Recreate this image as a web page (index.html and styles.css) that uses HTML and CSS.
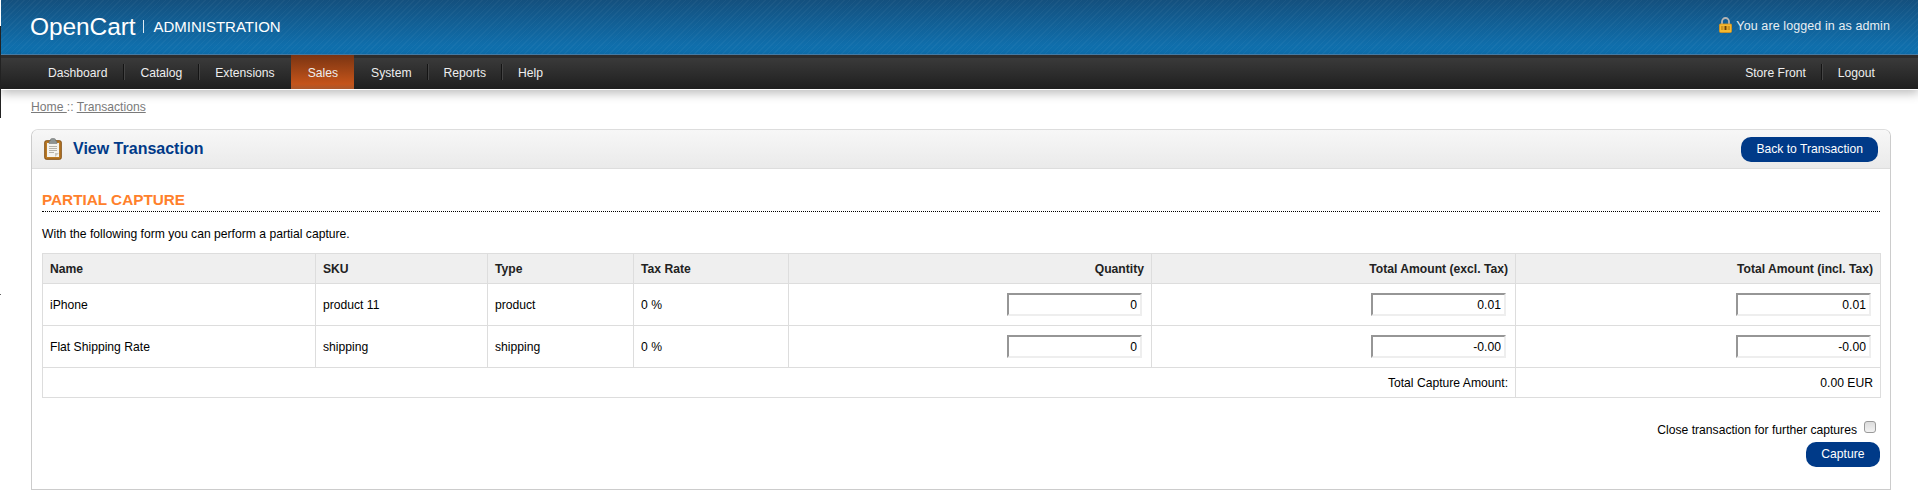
FILE: index.html
```html
<!DOCTYPE html>
<html lang="en">
<head>
<meta charset="utf-8">
<title>View Transaction</title>
<link rel="stylesheet" href="styles.css">
</head>
<body>
<div class="scan-edge"></div>
<header class="header">
  <div class="brand">
    <span class="logo">OpenCart</span>
    <span class="admin">ADMINISTRATION</span>
  </div>
  <div class="logged">
    <svg class="lock" width="13" height="16" viewBox="0 0 13 16">
      <path d="M3 8V4.500a3.500 3.500 0 0 1 7 0V8" fill="none" stroke="#b4b4b4" stroke-width="1.800"/>
      <rect x=".5" y="7" width="12" height="8.500" rx="1" fill="#f6b92f" stroke="#d9931a" stroke-width=".8"/>
      <rect x="5.500" y="9" width="2" height="4" fill="#6d4206"/>
      <path d="M2 10h2.500M2 12h2.500M8.500 10H11M8.500 12H11" stroke="#a86f10"/>
    </svg>
    <span>You are logged in as admin</span>
  </div>
</header>
<nav class="menu">
  <ul class="menu-left">
    <li><a>Dashboard</a></li>
    <li><a>Catalog</a></li>
    <li><a>Extensions</a></li>
    <li class="selected"><a>Sales</a></li>
    <li class="tight"><a>System</a></li>
    <li class="tight"><a>Reports</a></li>
    <li class="last"><a>Help</a></li>
  </ul>
  <ul class="menu-right">
    <li class="tight"><a>Store Front</a></li>
    <li class="last"><a>Logout</a></li>
  </ul>
</nav>
<main class="content">
  <div class="breadcrumb"><a>Home </a> :: <a>Transactions</a></div>
  <section class="box">
    <div class="heading">
      <h1>
        <svg class="clip" width="18" height="22" viewBox="0 0 18 22">
          <rect x=".75" y="2.750" width="16.500" height="18.500" rx="1.500" fill="#bb7a25" stroke="#7d4a0e" stroke-width="1"/>
          <path d="M3 5h12v14H3z" fill="#f4f3ef"/>
          <path d="M11 19l4-4h-4z" fill="#c9c6bd"/>
          <path d="M5 8.500h8M5 10.500h8M5 12.500h8M5 14.500h5" stroke="#b5b2aa" stroke-width="1"/>
          <path d="M5 3.500L6.500 2.500V1.500C6.500 .8 7.500 .5 9 .5s2.500 .3 2.500 1V2.500L13 3.500V5.500H5z" fill="#8e9493" stroke="#666b6a" stroke-width=".5"/>
        </svg>
        View Transaction
      </h1>
      <a class="button">Back to Transaction</a>
    </div>
    <div class="box-body">
      <h2>PARTIAL CAPTURE</h2>
      <p class="intro">With the following form you can perform a partial capture.</p>
      <table class="list">
        <colgroup>
          <col class="c-name"><col class="c-sku"><col class="c-type"><col class="c-tax"><col class="c-qty"><col class="c-ex"><col class="c-inc">
        </colgroup>
        <thead>
          <tr>
            <th>Name</th><th>SKU</th><th>Type</th><th>Tax Rate</th>
            <th class="right">Quantity</th><th class="right">Total Amount (excl. Tax)</th><th class="right">Total Amount (incl. Tax)</th>
          </tr>
        </thead>
        <tbody>
          <tr class="item">
            <td>iPhone</td><td>product 11</td><td>product</td><td>0 %</td>
            <td class="right"><input type="text" value="0"></td>
            <td class="right"><input type="text" value="0.01"></td>
            <td class="right"><input type="text" value="0.01"></td>
          </tr>
          <tr class="item">
            <td>Flat Shipping Rate</td><td>shipping</td><td>shipping</td><td>0 %</td>
            <td class="right"><input type="text" value="0"></td>
            <td class="right"><input type="text" value="-0.00"></td>
            <td class="right"><input type="text" value="-0.00"></td>
          </tr>
          <tr class="total">
            <td class="right" colspan="6">Total Capture Amount:</td>
            <td class="right">0.00 EUR</td>
          </tr>
        </tbody>
      </table>
      <div class="close-row">
        <label for="close">Close transaction for further captures</label>
        <input id="close" class="check" type="checkbox">
      </div>
      <div class="submit-row"><a class="button">Capture</a></div>
    </div>
  </section>
</main>
</body>
</html>
```
FILE: styles.css
```css
* { box-sizing: border-box; }
html, body { margin: 0; padding: 0; background: #fff; }
body { font-family: "Liberation Sans", Arial, sans-serif; font-size: 12.15px; color: #000; position: relative; overflow: hidden; height: 499px; }
.scan-edge { position: absolute; left: 0; top: 26px; width: 1px; height: 92px; background: #222; z-index: 3; }
.scan-edge::after { content: ""; position: absolute; left: 0; top: 268px; width: 1px; height: 1px; background: #666; }
.header { height: 55px; margin-left: 1px; border-bottom: 1px solid #4d86b3;
  background: repeating-linear-gradient(135deg, rgba(255,255,255,.035) 0 1px, rgba(255,255,255,0) 1px 4px), linear-gradient(#14507e, #0f74b4);
  display: flex; justify-content: space-between; align-items: flex-start; padding: 0 28px 0 29px; color: #fff; }
.brand { display: flex; align-items: center; height: 52px; }
.logo { font-size: 24.5px; letter-spacing: -.1px; padding-right: 8px; border-right: 1px solid #dfeaf2; line-height: 13px; height: 13px; display: flex; align-items: center; }
.admin { font-size: 15px; padding-left: 9px; }
.logged { display: flex; align-items: center; height: 52px; gap: 4px; font-size: 12.5px; color: #e8eef3; letter-spacing: .1px; }
.lock { margin-bottom: 2px; }
.menu { height: 34px; margin-left: 1px; background: linear-gradient(#2d2d2d 0, #2d2d2d 3px, #3a3a3a 3px, #1f1f1f 100%);
  display: flex; justify-content: space-between; padding: 0 26px 0 31px; box-shadow: 0 1px 0 #fff, 0 3px 10px 1px rgba(0,0,0,.28); position: relative; z-index: 1; }
.menu ul { list-style: none; margin: 0; padding: 0; display: flex; }
.menu li { position: relative; display: flex; align-items: center; height: 34px; padding: 2px 17px 0 16px; color: #eee; }
.menu li::after { content: ""; position: absolute; right: 0; top: 9px; height: 16px; width: 1px; background: #141414; box-shadow: 1px 0 0 #444; }
.menu li.last::after { display: none; }
.menu li.tight { padding-right: 16px; }
.menu li.selected { background: linear-gradient(#7a3412, #c4541a 85%, #a9582c); padding: 2px 16px 0 17px; margin: 0 1px 0 -1px; }
.menu li.selected::after { display: none; }
.content { padding: 0 27px 0 31px; }
.breadcrumb { height: 40px; padding-top: 11px; color: #7a7a7a; }
.breadcrumb a { color: #7a7a7a; text-decoration: underline; }
.box { border: 1px solid #ccc; border-top-color: #ddd; border-radius: 7px 7px 0 0; height: 361px; }
.heading { height: 39px; border-bottom: 1px solid #ddd; background: linear-gradient(#f7f7f7, #eaeaea); border-radius: 7px 7px 0 0;
  display: flex; justify-content: space-between; align-items: center; padding: 0 12px; }
h1 { margin: 0; display: flex; align-items: center; gap: 11px; font-size: 16px; font-weight: bold; color: #003a88; }
.clip { display: block; }
.button { display: inline-block; background: #003a88; color: #fff; border-radius: 10px; height: 25px; line-height: 25px; padding: 0 15px; }
.box-body { padding: 23px 10px 0; }
h2 { margin: 0; height: 20px; font-size: 15.3px; font-weight: bold; color: #ff802b; border-bottom: 1px dotted #000; line-height: 16px; }
.intro { margin: 0; padding-top: 15px; height: 41px; }
.list { width: 100%; border-collapse: collapse; table-layout: fixed; border: 1px solid #ddd; }
.c-name { width: 273px; } .c-sku { width: 172px; } .c-type { width: 146px; } .c-tax { width: 155px; } .c-qty { width: 363px; } .c-ex { width: 364px; } .c-inc { width: 365px; }
.list th, .list td { border: 1px solid #ddd; padding: 0 7px; text-align: left; color: #000; }
.list th { background: #efefef; height: 30px; font-weight: bold; color: #222; }
.list .right { text-align: right; }
.item td { height: 42px; }
.total td { height: 30px; }
.item td.right { padding-right: 9px; }
.list input { width: 135px; height: 23px; font: 12.15px "Liberation Sans", Arial, sans-serif; text-align: right; padding: 1px 3px; color: #000; border: 2px solid; border-color: #969696 #eee #eee #969696; background: #fff; display: inline-block; vertical-align: middle; outline: 0; }
.close-row { display: flex; justify-content: flex-end; align-items: center; gap: 7px; margin-top: 21px; height: 22px; padding-right: 4px; }
.check { appearance: none; width: 12px; height: 12px; margin: 0 0 6px; border: 1px solid #9a9a9a; border-radius: 3px; background: linear-gradient(#dcdcdc, #f2f2f2); }
.submit-row { display: flex; justify-content: flex-end; margin-top: 1px; }
.submit-row .button { padding: 0 15.500px; }
```
